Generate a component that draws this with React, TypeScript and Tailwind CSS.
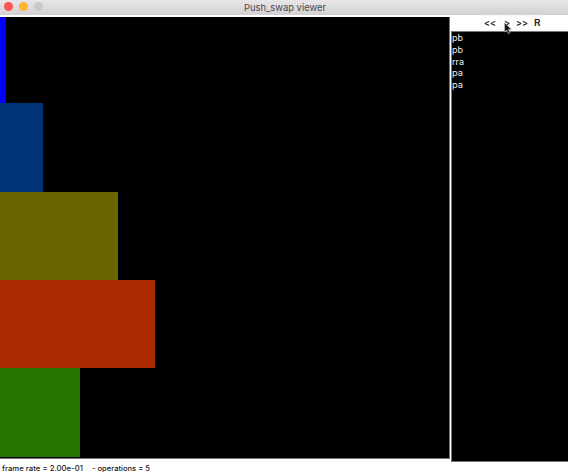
const bars = [
  { id: 1, style: 'w-[6px] h-[86px] bg-[#0000ff]' },
  { id: 2, style: 'w-[43px] h-[89px] bg-[#003476]' },
  { id: 4, style: 'w-[118px] h-[88px] bg-[#696400]' },
  { id: 5, style: 'w-[155px] h-[88px] bg-[#aa2b00]' },
  { id: 3, style: 'w-[80px] h-[89px] bg-[#277500]' },
];

const operations = ['pb', 'pb', 'rra', 'pa', 'pa'];

const controls = [
  { label: '<<', box: 'w-[16px]', text: 12 },
  { label: '>', box: 'w-[11px]', text: 6 },
  { label: '>>', box: 'w-[14px]', text: 12 },
  { label: 'R', box: 'w-[10px]', text: 6.5 },
];

function Label({ text, width, size = 8 }: { text: string; width: number; size?: number }) {
  return (
    <svg width={width} height="12" className="block shrink-0 overflow-visible" fill="currentColor">
      <text x="0" y="9" fontSize={size} textLength={width} lengthAdjust="spacingAndGlyphs">
        {text}
      </text>
    </svg>
  );
}

function TitleBar() {
  return (
    <header className="relative flex h-[15px] shrink-0 items-center justify-center bg-linear-to-b from-[#e8e6e8] to-[#d2d0d2] text-[#4b494b]">
      <div className="absolute left-[4px] top-[2px] flex gap-[6px]">
        <span className="size-[9px] rounded-full bg-[#fc5652]" />
        <span className="size-[9px] rounded-full bg-[#fdb52d]" />
        <span className="size-[9px] rounded-full bg-[#cbc9cc]" />
      </div>
      <div className="ml-[2px]">
        <Label text="Push_swap viewer" width={82} size={9.6} />
      </div>
    </header>
  );
}

function Pointer() {
  return (
    <svg className="absolute left-[3px] top-[6px] z-10" width="9" height="14" viewBox="0 0 9 14">
      <path d="M.6.8v9.1l2-1.8 1.6 3.6 1.9-.8-1.6-3.5h2.8z" fill="#111" stroke="#bbb" strokeWidth=".7" />
    </svg>
  );
}

export default function App() {
  return (
    <div className="flex h-[472px] w-[568px] flex-col overflow-hidden bg-white font-['Inter','Liberation_Sans',sans-serif]">
      <TitleBar />
      <div className="flex grow">
        <main className="flex w-[450px] shrink-0 flex-col pt-[2px]">
          <div className="h-[442px] border-b border-r border-[#777] bg-black">
            {bars.map((bar) => (
              <div key={bar.id} className={bar.style} />
            ))}
          </div>
          <footer className="flex gap-[9px] pl-[2px] pt-[3px] font-medium text-[#202020]">
            <Label text="frame rate = 2.00e-01" width={81} size={7.2} />
            <Label text="- operations = 5" width={58} size={7.2} />
          </footer>
        </main>
        <aside className="ml-px flex grow flex-col">
          <nav className="flex h-[16px] justify-center pl-[5px] pt-px">
            <div className="flex gap-[3px] font-semibold text-[#222]">
              {controls.map((control) => (
                <button
                  key={control.label}
                  className={`${control.box} relative flex h-[14px] items-center justify-center rounded-xs bg-white shadow-[0_0_1px_#ccc]`}
                >
                  <Label text={control.label} width={control.text} size={9.5} />
                  {control.label === '>' && <Pointer />}
                </button>
              ))}
            </div>
          </nav>
          <ul className="h-[431px] border-y border-l border-[#777] bg-black text-[#eee]">
            {operations.map((operation, index) => (
              <li key={index} className="h-[11.8px]">
                <Label text={operation} width={operation === 'rra' ? 12 : 11} size={8.8} />
              </li>
            ))}
          </ul>
        </aside>
      </div>
    </div>
  );
}
